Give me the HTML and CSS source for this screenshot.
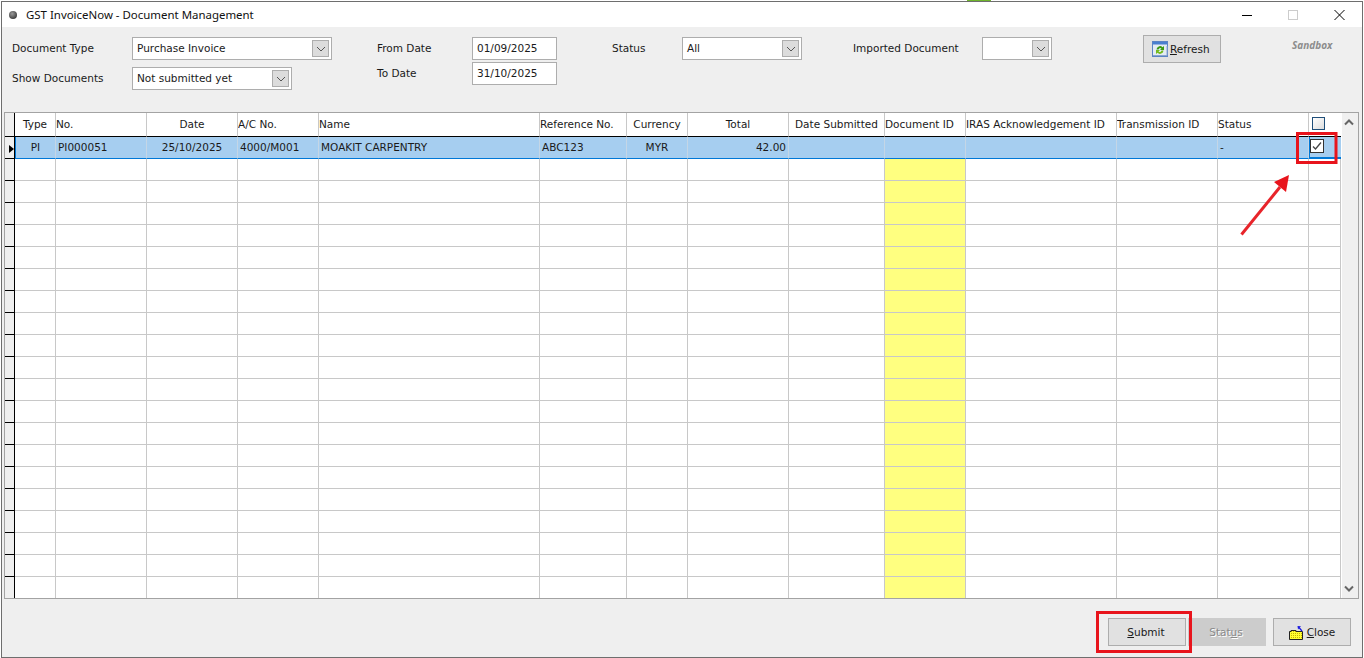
FILE: index.html
```html
<!DOCTYPE html>
<html lang="en">
<head>
<meta charset="utf-8">
<title>GST InvoiceNow - Document Management</title>
<link rel="stylesheet" href="styles.css">
</head>
<body>
<div class="strip"></div>
<main class="window">
  <header class="titlebar">
    <span class="dot"></span>
    <span class="title">GST InvoiceNow - Document Management</span>
    <div class="winctl">
      <svg class="ctl" width="46" height="12" viewBox="0 0 46 12"><path d="M0 6.5H10" stroke="#000" fill="none"/></svg>
      <svg class="ctl" width="46" height="12" viewBox="0 0 46 12"><rect x="0.5" y="1.5" width="9" height="9" stroke="#ccc" fill="none"/></svg>
      <svg class="ctl last" width="11" height="12" viewBox="0 0 11 12"><path d="M0.5 1L10.5 11M10.5 1L0.5 11" stroke="#000" fill="none"/></svg>
    </div>
  </header>

  <section class="filters">
    <div class="group g-doc">
      <div class="row"><label class="lbl l-doc">Document Type</label>
        <div class="combo c-type"><span>Purchase Invoice</span><i class="drop"><svg width="10" height="6" viewBox="0 0 10 6"><path d="M1 1L5 5L9 1" stroke="#555" fill="none"/></svg></i></div></div>
      <div class="row"><label class="lbl l-doc">Show Documents</label>
        <div class="combo c-show"><span>Not submitted yet</span><i class="drop"><svg width="10" height="6" viewBox="0 0 10 6"><path d="M1 1L5 5L9 1" stroke="#555" fill="none"/></svg></i></div></div>
    </div>
    <div class="group g-date">
      <div class="row"><label class="lbl l-date">From Date</label><div class="field">01/09/2025</div></div>
      <div class="row"><label class="lbl l-date">To Date</label><div class="field">31/10/2025</div></div>
    </div>
    <div class="group g-status">
      <div class="row"><label class="lbl l-status">Status</label>
        <div class="combo c-status"><span>All</span><i class="drop"><svg width="10" height="6" viewBox="0 0 10 6"><path d="M1 1L5 5L9 1" stroke="#555" fill="none"/></svg></i></div></div>
    </div>
    <div class="group g-imp">
      <div class="row"><label class="lbl l-imp">Imported Document</label>
        <div class="combo c-imp"><span></span><i class="drop"><svg width="10" height="6" viewBox="0 0 10 6"><path d="M1 1L5 5L9 1" stroke="#555" fill="none"/></svg></i></div></div>
    </div>
    <button class="btn refresh" type="button">
      <svg width="16" height="16" viewBox="0 0 16 16"><rect x="0.500" y="0.500" width="15" height="15" fill="#e4ebf3" stroke="#5b83c4"/><rect x="1" y="1" width="14" height="2.500" fill="#4a7fd0"/><path d="M1 14.500H15V5" stroke="#8aa6cf" fill="none"/><path d="M4.500 8.500a3.500 3.500 0 0 1 6-2.300L12 5V9H8L9.500 7.500A2 2 0 0 0 6.500 8.500Z" fill="#3c9a12"/><path d="M11.500 9.500a3.500 3.500 0 0 1-6 2.300L4 13V9H8L6.500 10.500A2 2 0 0 0 9.500 9.500Z" fill="#74bb1e"/></svg><span><u>R</u>efresh</span>
    </button>
    <div class="sandbox">Sandbox</div>
  </section>

  <section class="gridwrap">
    <table class="grid">
      <colgroup>
        <col class="w10"><col class="w41"><col class="w91"><col class="w91"><col class="w81"><col class="w221"><col class="w87"><col class="w61"><col class="w101"><col class="w96"><col class="w81"><col class="w151"><col class="w101"><col class="w91"><col class="w32">
      </colgroup>
      <thead>
        <tr>
          <th class="rh"></th><th class="ctr">Type</th><th>No.</th><th class="ctr">Date</th><th>A/C No.</th><th>Name</th><th>Reference No.</th><th class="ctr">Currency</th><th class="ctr">Total</th><th class="ctr">Date Submitted</th><th>Document ID</th><th>IRAS Acknowledgement ID</th><th>Transmission ID</th><th>Status</th><th class="chkh"><span class="allbox"></span></th>
        </tr>
      </thead>
      <tbody>
        <tr class="sel">
          <th class="rh"><span class="tri"></span></th><td class="ctr first">PI</td><td>PI000051</td><td class="ctr">25/10/2025</td><td>4000/M001</td><td>MOAKIT CARPENTRY</td><td>ABC123</td><td class="ctr">MYR</td><td class="num">42.00</td><td></td><td></td><td></td><td></td><td>-</td>
          <td class="chkc"><svg class="chk" width="14" height="14" viewBox="0 0 14 14"><rect x="0.500" y="0.500" width="13" height="13" fill="#fff" stroke="#333"/><path d="M3 7.500L5.500 10L11 3.500" stroke="#444" stroke-width="1.300" fill="none"/></svg></td>
        </tr>
        <tr><th class="rh"></th><td></td><td></td><td></td><td></td><td></td><td></td><td></td><td></td><td></td><td class="yel"></td><td></td><td></td><td></td><td></td></tr>
        <tr><th class="rh"></th><td></td><td></td><td></td><td></td><td></td><td></td><td></td><td></td><td></td><td class="yel"></td><td></td><td></td><td></td><td></td></tr>
        <tr><th class="rh"></th><td></td><td></td><td></td><td></td><td></td><td></td><td></td><td></td><td></td><td class="yel"></td><td></td><td></td><td></td><td></td></tr>
        <tr><th class="rh"></th><td></td><td></td><td></td><td></td><td></td><td></td><td></td><td></td><td></td><td class="yel"></td><td></td><td></td><td></td><td></td></tr>
        <tr><th class="rh"></th><td></td><td></td><td></td><td></td><td></td><td></td><td></td><td></td><td></td><td class="yel"></td><td></td><td></td><td></td><td></td></tr>
        <tr><th class="rh"></th><td></td><td></td><td></td><td></td><td></td><td></td><td></td><td></td><td></td><td class="yel"></td><td></td><td></td><td></td><td></td></tr>
        <tr><th class="rh"></th><td></td><td></td><td></td><td></td><td></td><td></td><td></td><td></td><td></td><td class="yel"></td><td></td><td></td><td></td><td></td></tr>
        <tr><th class="rh"></th><td></td><td></td><td></td><td></td><td></td><td></td><td></td><td></td><td></td><td class="yel"></td><td></td><td></td><td></td><td></td></tr>
        <tr><th class="rh"></th><td></td><td></td><td></td><td></td><td></td><td></td><td></td><td></td><td></td><td class="yel"></td><td></td><td></td><td></td><td></td></tr>
        <tr><th class="rh"></th><td></td><td></td><td></td><td></td><td></td><td></td><td></td><td></td><td></td><td class="yel"></td><td></td><td></td><td></td><td></td></tr>
        <tr><th class="rh"></th><td></td><td></td><td></td><td></td><td></td><td></td><td></td><td></td><td></td><td class="yel"></td><td></td><td></td><td></td><td></td></tr>
        <tr><th class="rh"></th><td></td><td></td><td></td><td></td><td></td><td></td><td></td><td></td><td></td><td class="yel"></td><td></td><td></td><td></td><td></td></tr>
        <tr><th class="rh"></th><td></td><td></td><td></td><td></td><td></td><td></td><td></td><td></td><td></td><td class="yel"></td><td></td><td></td><td></td><td></td></tr>
        <tr><th class="rh"></th><td></td><td></td><td></td><td></td><td></td><td></td><td></td><td></td><td></td><td class="yel"></td><td></td><td></td><td></td><td></td></tr>
        <tr><th class="rh"></th><td></td><td></td><td></td><td></td><td></td><td></td><td></td><td></td><td></td><td class="yel"></td><td></td><td></td><td></td><td></td></tr>
        <tr><th class="rh"></th><td></td><td></td><td></td><td></td><td></td><td></td><td></td><td></td><td></td><td class="yel"></td><td></td><td></td><td></td><td></td></tr>
        <tr><th class="rh"></th><td></td><td></td><td></td><td></td><td></td><td></td><td></td><td></td><td></td><td class="yel"></td><td></td><td></td><td></td><td></td></tr>
        <tr><th class="rh"></th><td></td><td></td><td></td><td></td><td></td><td></td><td></td><td></td><td></td><td class="yel"></td><td></td><td></td><td></td><td></td></tr>
        <tr><th class="rh"></th><td></td><td></td><td></td><td></td><td></td><td></td><td></td><td></td><td></td><td class="yel"></td><td></td><td></td><td></td><td></td></tr>
        <tr class="lastrow"><th class="rh"></th><td></td><td></td><td></td><td></td><td></td><td></td><td></td><td></td><td></td><td class="yel"></td><td></td><td></td><td></td><td></td></tr>
      </tbody>
    </table>
    <div class="scroll">
      <svg width="10" height="7" viewBox="0 0 10 7"><path d="M1 5.500L5 1.500L9 5.500" stroke="#666" stroke-width="2" fill="none"/></svg>
      <svg width="10" height="7" viewBox="0 0 10 7"><path d="M1 1.500L5 5.500L9 1.500" stroke="#666" stroke-width="2" fill="none"/></svg>
    </div>
  </section>

  <footer class="actions">
    <button class="btn act" type="button"><span><u>S</u>ubmit</span></button>
    <button class="btn act off" type="button"><span>Stat<u>u</u>s</span></button>
    <button class="btn act close" type="button">
      <svg width="15" height="15" viewBox="0 0 15 15"><defs><pattern id="dots" width="2" height="2" patternUnits="userSpaceOnUse"><rect width="2" height="2" fill="#ffff30"/><rect width="1" height="1" fill="#c8b400"/></pattern></defs><path d="M0.500 6.500H2V5.500H7V6.500H13.500V14.500H0.500Z" fill="url(#dots)" stroke="#222"/><path d="M13 6L10 2.500" stroke="#1a1ae0" stroke-width="1.200" fill="none"/><path d="M8.500 1L12 1.200L9 4.500Z" fill="#1a1ae0"/></svg><span><u>C</u>lose</span>
    </button>
  </footer>
</main>

<svg class="marks" width="1364" height="658" viewBox="0 0 1364 658">
  <rect x="1297.500" y="133.500" width="38.500" height="29" fill="none" stroke="#e8141c" stroke-width="3"/>
  <rect x="1097.500" y="612.500" width="93" height="39" fill="none" stroke="#e8141c" stroke-width="3"/>
  <path d="M1241.500 234.500L1280 187" stroke="#e8242a" stroke-width="3" fill="none"/>
  <path d="M1289 175L1274 182L1286 192Z" fill="#e8141c"/>
</svg>
</body>
</html>
```
FILE: styles.css
```css
* { box-sizing: border-box; }
html, body { margin: 0; padding: 0; }
body {
  width: 1364px;
  height: 658px;
  overflow: hidden;
  padding: 1px 1px 0;
  background: #fff;
  color: #1a1a1a;
  font: 10.5px/14px "DejaVu Sans", sans-serif;
  position: relative;
}
.strip {
  position: absolute;
  top: 0;
  left: 967px;
  width: 24px;
  height: 1px;
  background: #6fb52c;
}
.window {
  width: 1362px;
  height: 657px;
  border: 1px solid #6e6e6e;
  background: #efefef;
  display: flex;
  flex-direction: column;
}
.titlebar {
  height: 25px;
  flex: none;
  background: #fff;
  display: flex;
  align-items: center;
  padding-left: 7px;
}
.dot {
  width: 8px;
  height: 8px;
  border-radius: 50%;
  background: radial-gradient(circle at 40% 35%, #9a9a9a, #3c3c3c 75%);
  margin-right: 9px;
}
.title {
  font: 11.45px/16px "Noto Sans", sans-serif;
  color: #111;
}
.winctl {
  margin-left: auto;
  display: flex;
  padding-right: 17px;
}
.ctl { display: block; }
.filters {
  height: 85px;
  flex: none;
  display: flex;
  align-items: flex-start;
  padding: 10px 0 0 10px;
}
.group { display: flex; flex-direction: column; }
.row { display: flex; align-items: center; }
.g-doc { gap: 7px; }
.g-date { gap: 2px; margin-left: 45px; }
.g-status { margin-left: 55px; }
.g-imp { margin-left: 51px; }
.lbl { display: block; flex: none; margin-bottom: 2px; }
.l-doc { width: 120px; }
.l-date { width: 95px; }
.l-status { width: 70px; }
.l-imp { width: 129px; }
.combo, .field {
  height: 23px;
  background: #fff;
  border: 1px solid #adadad;
  display: flex;
  align-items: center;
  padding-left: 4px;
}
.field { width: 85px; padding-bottom: 2px; }
.combo span { flex: 1; margin-bottom: 2px; }
.c-type { width: 200px; }
.c-show { width: 160px; }
.c-status { width: 120px; }
.c-imp { width: 70px; }
.drop {
  width: 17px;
  height: 17px;
  margin-right: 2px;
  background: #dcdcdc;
  border: 1px solid #adadad;
  display: flex;
  align-items: center;
  justify-content: center;
}
.btn {
  font: inherit;
  color: #1a1a1a;
  height: 28px;
  width: 78px;
  background: #e1e1e1;
  border: 1px solid #adadad;
  padding: 0;
  display: flex;
  align-items: center;
  justify-content: center;
}
.refresh {
  margin-left: 91px;
  margin-top: -2px;
  justify-content: flex-start;
  padding-left: 8px;
  gap: 2px;
}
.sandbox {
  margin-left: 71px;
  margin-top: 1px;
  font: italic bold 10px/14px "Open Sans", sans-serif;
  color: #8c8c8c;
}
.gridwrap {
  height: 487px;
  flex: none;
  margin-left: 2px;
  width: 1355px;
  border: 1px solid #a3a3a3;
  display: flex;
  background: #fff;
}
.grid {
  table-layout: fixed;
  border-collapse: separate;
  border-spacing: 0;
  width: 1336px;
  height: 485px;
  background: #fff;
}
.w10 { width: 10px; }
.w41 { width: 41px; }
.w91 { width: 91px; }
.w81 { width: 81px; }
.w221 { width: 221px; }
.w87 { width: 87px; }
.w61 { width: 61px; }
.w101 { width: 101px; }
.w96 { width: 96px; }
.w151 { width: 151px; }
.w32 { width: 32px; }
th, td {
  padding: 0;
  height: 22px;
  border-right: 1px solid #c8c8c8;
  border-bottom: 1px solid #c8c8c8;
  font-weight: normal;
  text-align: left;
  white-space: nowrap;
  overflow: hidden;
  line-height: 14px;
}
thead th {
  height: 24px;
  padding-bottom: 2px;
  border-bottom: 1px solid #000;
}
td { padding-left: 2px; }
.sel td { padding-bottom: 2px; }
td:empty { padding: 0; }
.ctr { text-align: center; }
td.ctr { padding-left: 0; }
td.num { text-align: right; padding-right: 2px; }
.rh {
  background: #efefef;
  border-right: 1px solid #000;
  border-bottom: 1px solid #000;
}
.sel td {
  background: #a6cef0;
  border-right-color: #c4d6e6;
  border-bottom-color: #0078d7;
}
.sel .first { border-left: 1px solid #0078d7; }
.yel { background: #ffff80; }
.lastrow td, .lastrow th { border-bottom: 0; height: 21px; }
.tri {
  display: block;
  width: 0;
  height: 0;
  margin: 3px 0 0 4px;
  border-left: 5px solid #000;
  border-top: 4px solid transparent;
  border-bottom: 4px solid transparent;
}
.allbox {
  display: block;
  width: 13px;
  height: 13px;
  margin-left: 3px;
  border: 1px solid #1f4e79;
  background: linear-gradient(135deg, #fff, #dcdcdc);
}
.chkh { border-right: 0; }
td.chkc { padding: 0; border-right: 0; }
.chk { display: block; margin-top: -3px; }
.sel .chkc { background: #a6cef0; border-left: 1px solid #0078d7; border-bottom: 2px solid #0078d7; }
.scroll {
  width: 17px;
  flex: none;
  background: #f0f0f0;
  border-left: 1px solid #fff;
  display: flex;
  flex-direction: column;
  justify-content: space-between;
  align-items: center;
  padding: 6px 2px 6px 0;
}
.scroll svg { display: block; }
.actions {
  flex: 1;
  display: flex;
  justify-content: flex-end;
  align-items: flex-start;
  padding: 19px 11px 0 0;
}
.act { margin-left: 2px; padding-right: 2px; }
.off {
  background: #cccccc;
  border-color: #cccccc;
  color: #8a8a8a;
  text-shadow: 1px 1px 0 #fff;
}
.close { margin-left: 7px; gap: 3px; padding-right: 0; }
.marks {
  position: absolute;
  left: 0;
  top: 0;
  pointer-events: none;
}
```
